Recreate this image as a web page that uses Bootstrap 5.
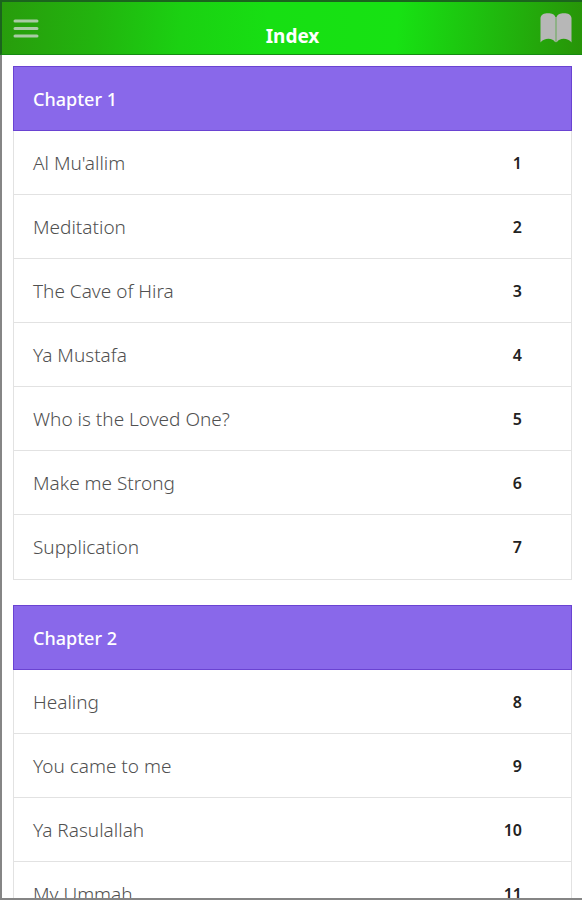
<!DOCTYPE html>
<html lang="en">
<head>
<meta charset="utf-8">
<meta name="viewport" content="width=device-width, initial-scale=1">
<title>Index</title>
<link href="https://cdn.jsdelivr.net/npm/bootstrap@5.3.0/dist/css/bootstrap.min.css" rel="stylesheet">
<style>
body { font-family: "Noto Sans", "Open Sans", sans-serif; font-size: 19px; line-height: 24px; }
.app-bar {
  min-height: 55px;
  padding: 8px 10px 6px 11px;
  border: solid #1b641d;
  border-width: 2px 0 1px 2px;
  border-bottom-color: #168a12;
  background: linear-gradient(94deg, #289c0c 0%, #22b40e 16%, #1bd112 31%, #17df13 46%, #17e213 68%, #1fbb0e 84%, #289408 100%);
}
.app-bar button { line-height: 0; }
.app-bar h1 { font-size: 19px; line-height: 24px; padding-top: 14px; }
.screen { min-height: 0; padding: 11px 10px 0 11px; border: solid #858585; border-width: 0 0 2px 2px; }
.chapter { --bs-list-group-border-color: #e2e2e2; margin-bottom: 25px; }
.chapter .list-group-item { padding: 20px 49px 19px 19px; color: #505050; font-weight: 300; }
.chapter .list-group-item:last-child { padding-bottom: 20px; }
.chapter .chapter-title { background: #8968ea; border-color: #6a43d2; color: #fff; font-size: 18px; line-height: 24px; font-weight: 500; }
.chapter .page-no { font-size: 16px; font-weight: 600; color: #222; }
</style>
</head>
<body>
<div class="d-flex flex-column vh-100 overflow-hidden">
  <header class="app-bar d-flex justify-content-between align-items-start">
    <button type="button" class="btn p-0 border-0" aria-label="Menu">
      <svg width="32" height="34" viewBox="0 0 32 34" stroke="#a9cba5" stroke-width="3" stroke-linecap="round" aria-hidden="true"><path d="M2 11H24M2 18.500H24M2 26H24"/></svg>
    </button>
    <h1 class="m-0 fw-bold text-white">Index</h1>
    <button type="button" class="btn p-0 border-0" aria-label="Open book">
      <svg width="32" height="34" viewBox="0 0 32 34" fill="#b7b7b7" aria-hidden="true"><path d="M0.500 8C1 4.500 4 3.200 8 3.200C12 3.200 15 4.500 15.300 7V32.500C13 27.500 4 27.500 0.500 32.500Z"/><path d="M16.700 7C17 4.500 20 3.200 24 3.200C28 3.200 31 4.500 31.500 8V32.500C28 27.500 19 27.500 16.700 32.500Z"/><path d="M15 7H17V32H15Z" fill-opacity=".6"/></svg>
    </button>
  </header>
  <main class="screen flex-grow-1 overflow-hidden">
    <section class="chapter list-group rounded-0">
      <h2 class="list-group-item chapter-title m-0">Chapter 1</h2>
      <a href="#p1" class="list-group-item d-flex justify-content-between"><span>Al Mu'allim</span><span class="page-no">1</span></a>
      <a href="#p2" class="list-group-item d-flex justify-content-between"><span>Meditation</span><span class="page-no">2</span></a>
      <a href="#p3" class="list-group-item d-flex justify-content-between"><span>The Cave of Hira</span><span class="page-no">3</span></a>
      <a href="#p4" class="list-group-item d-flex justify-content-between"><span>Ya Mustafa</span><span class="page-no">4</span></a>
      <a href="#p5" class="list-group-item d-flex justify-content-between"><span>Who is the Loved One?</span><span class="page-no">5</span></a>
      <a href="#p6" class="list-group-item d-flex justify-content-between"><span>Make me Strong</span><span class="page-no">6</span></a>
      <a href="#p7" class="list-group-item d-flex justify-content-between"><span>Supplication</span><span class="page-no">7</span></a>
    </section>
    <section class="chapter list-group rounded-0">
      <h2 class="list-group-item chapter-title m-0">Chapter 2</h2>
      <a href="#p8" class="list-group-item d-flex justify-content-between"><span>Healing</span><span class="page-no">8</span></a>
      <a href="#p9" class="list-group-item d-flex justify-content-between"><span>You came to me</span><span class="page-no">9</span></a>
      <a href="#p10" class="list-group-item d-flex justify-content-between"><span>Ya Rasulallah</span><span class="page-no">10</span></a>
      <a href="#p11" class="list-group-item d-flex justify-content-between"><span>My Ummah</span><span class="page-no">11</span></a>
    </section>
  </main>
</div>
<script src="https://cdn.jsdelivr.net/npm/bootstrap@5.3.0/dist/js/bootstrap.bundle.min.js"></script>
</body>
</html>
